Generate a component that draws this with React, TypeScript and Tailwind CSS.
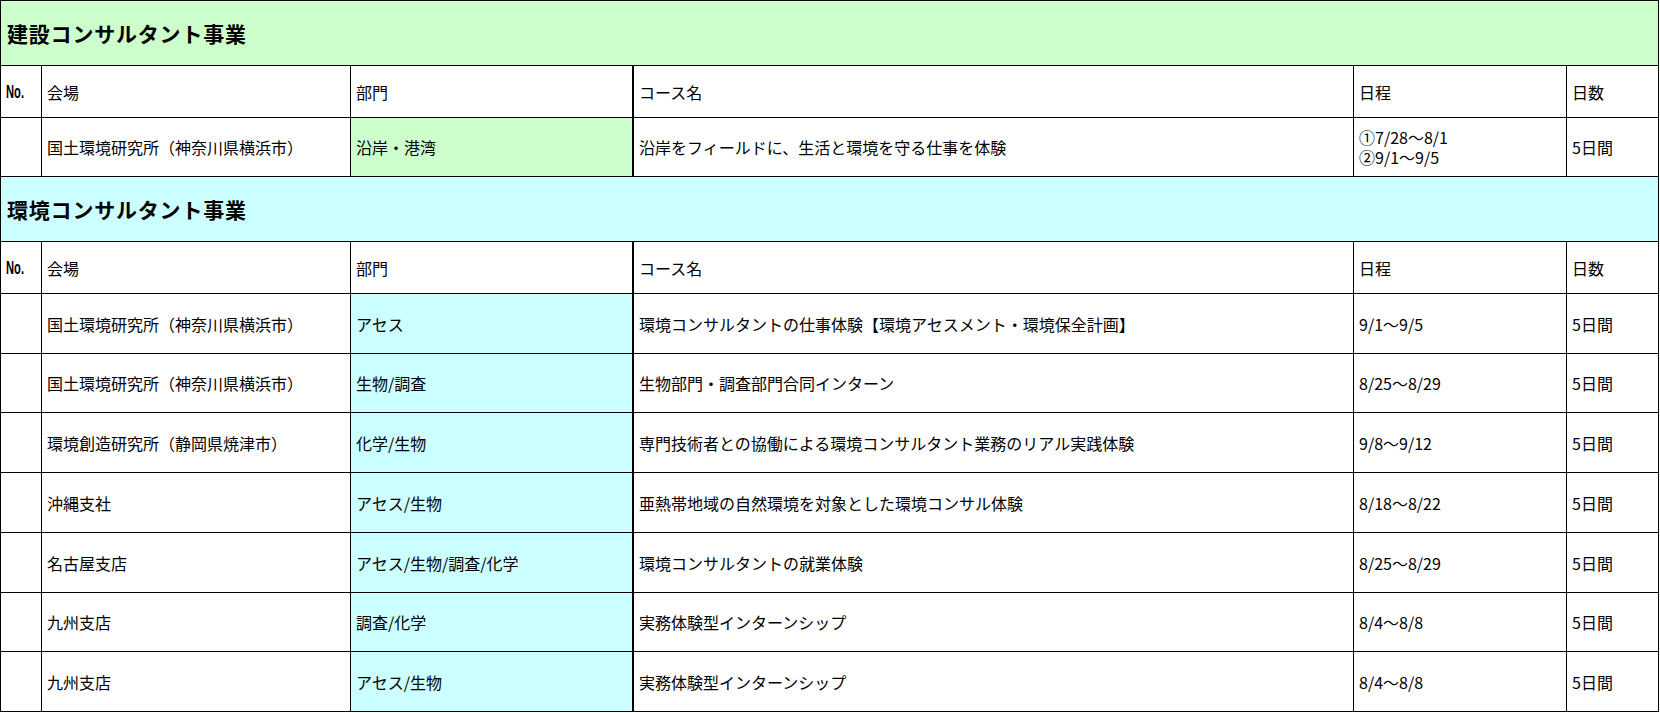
import React from 'react';

// 列の幅（右側の罫線を含む）
const COLS = 'grid-cols-[41px_309px_283px_720px_213px_92px]';

type Row = {
  venue: string;
  dept: string;
  course: string;
  dates: string;
  days: string;
  h: string;
};

const kensetsu: Row[] = [
  {
    venue: '国土環境研究所（神奈川県横浜市）',
    dept: '沿岸・港湾',
    course: '沿岸をフィールドに、生活と環境を守る仕事を体験',
    dates: '①7/28～8/1\n②9/1～9/5',
    days: '5日間',
    h: 'h-[59px]',
  },
];

const kankyo: Row[] = [
  {
    venue: '国土環境研究所（神奈川県横浜市）',
    dept: 'アセス',
    course: '環境コンサルタントの仕事体験【環境アセスメント・環境保全計画】',
    dates: '9/1～9/5',
    days: '5日間',
    h: 'h-[60px]',
  },
  {
    venue: '国土環境研究所（神奈川県横浜市）',
    dept: '生物/調査',
    course: '生物部門・調査部門合同インターン',
    dates: '8/25～8/29',
    days: '5日間',
    h: 'h-[59px]',
  },
  {
    venue: '環境創造研究所（静岡県焼津市）',
    dept: '化学/生物',
    course: '専門技術者との協働による環境コンサルタント業務のリアル実践体験',
    dates: '9/8～9/12',
    days: '5日間',
    h: 'h-[60px]',
  },
  {
    venue: '沖縄支社',
    dept: 'アセス/生物',
    course: '亜熱帯地域の自然環境を対象とした環境コンサル体験',
    dates: '8/18～8/22',
    days: '5日間',
    h: 'h-[60px]',
  },
  {
    venue: '名古屋支店',
    dept: 'アセス/生物/調査/化学',
    course: '環境コンサルタントの就業体験',
    dates: '8/25～8/29',
    days: '5日間',
    h: 'h-[60px]',
  },
  {
    venue: '九州支店',
    dept: '調査/化学',
    course: '実務体験型インターンシップ',
    dates: '8/4～8/8',
    days: '5日間',
    h: 'h-[59px]',
  },
  {
    venue: '九州支店',
    dept: 'アセス/生物',
    course: '実務体験型インターンシップ',
    dates: '8/4～8/8',
    days: '5日間',
    h: 'h-[60px]',
  },
];

const cell = 'flex items-center border-r border-b border-black pl-[5px] overflow-hidden whitespace-nowrap';

function Section({ title, band, rows }: { title: string; band: string; rows: Row[] }) {
  return (
    <>
      <div className={`${band} h-[65px] border-r border-b border-black flex items-center pl-[6px]`}>
        <span className="text-[21px] font-bold tracking-[0.8px] leading-none">{title}</span>
      </div>
      <div className={`grid ${COLS} h-[52px]`}>
        <div className={`${cell} pl-[3px]`}>
          <span className="inline-block origin-left scale-x-[0.62] font-bold font-['Liberation_Sans',sans-serif] text-[18px] leading-none">No.</span>
        </div>
        <div className={cell}>会場</div>
        <div className={`${cell} border-r-2`}>部門</div>
        <div className={cell}>コース名</div>
        <div className={cell}>日程</div>
        <div className={cell}>日数</div>
      </div>
      {rows.map((r, i) => (
        <div key={i} className={`grid ${COLS} ${r.h}`}>
          <div className={cell}></div>
          <div className={cell}>{r.venue}</div>
          <div className={`${cell} ${band} border-r-2`}>{r.dept}</div>
          <div className={cell}>{r.course}</div>
          <div className={cell}>
            <span className="whitespace-pre-line leading-[20px]">{r.dates}</span>
          </div>
          <div className={cell}>{r.days}</div>
        </div>
      ))}
    </>
  );
}

export default function App() {
  return (
    <div className="bg-white w-[1660px] h-[713px] text-black text-[16px] font-['Noto_Sans_CJK_JP',sans-serif]">
      <div className="w-[1659px] border-l border-t border-black">
        <Section title="建設コンサルタント事業" band="bg-[#ccffcc]" rows={kensetsu} />
        <Section title="環境コンサルタント事業" band="bg-[#ccffff]" rows={kankyo} />
      </div>
    </div>
  );
}
